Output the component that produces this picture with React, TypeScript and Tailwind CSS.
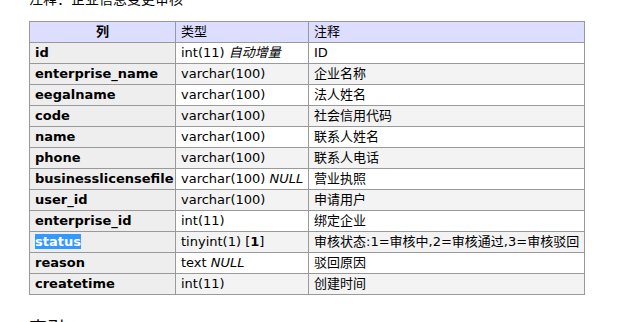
import React from "react";

const rows: { name: string; type: React.ReactNode; comment: string; sel?: boolean }[] = [
  { name: "id", type: <>int(11) <i>自动增量</i></>, comment: "ID" },
  { name: "enterprise_name", type: "varchar(100)", comment: "企业名称" },
  { name: "eegalname", type: "varchar(100)", comment: "法人姓名" },
  { name: "code", type: "varchar(100)", comment: "社会信用代码" },
  { name: "name", type: "varchar(100)", comment: "联系人姓名" },
  { name: "phone", type: "varchar(100)", comment: "联系人电话" },
  { name: "businesslicensefile", type: <>varchar(100) <i>NULL</i></>, comment: "营业执照" },
  { name: "user_id", type: "varchar(100)", comment: "申请用户" },
  { name: "enterprise_id", type: "int(11)", comment: "绑定企业" },
  { name: "status", type: <>tinyint(1) [<b>1</b>]</>, comment: "审核状态:1=审核中,2=审核通过,3=审核驳回", sel: true },
  { name: "reason", type: <>text <i>NULL</i></>, comment: "驳回原因" },
  { name: "createtime", type: "int(11)", comment: "创建时间" },
];

export default function App() {
  return (
    <div
      className="w-[623px] h-[322px] overflow-hidden bg-white text-black pl-[29px]"
      style={{ fontFamily: '"DejaVu Sans", Verdana, "Noto Sans CJK SC", sans-serif' }}
    >
      <div className="-mt-[10px] h-[18px] text-[14px] leading-[18px] whitespace-nowrap">注释：企业信息变更审核</div>
      <table className="mt-[13px] border-collapse text-[13px] leading-[20px] table-fixed w-[555px]">
        <colgroup>
          <col className="w-[146px]" />
          <col className="w-[133px]" />
          <col className="w-[276px]" />
        </colgroup>
        <thead>
          <tr className="bg-[#ddddff] h-[21px]">
            <th className="border border-[#999] px-[5px] py-0 font-bold text-center">列</th>
            <td className="border border-[#999] px-[5px] py-0">类型</td>
            <td className="border border-[#999] px-[5px] py-0">注释</td>
          </tr>
        </thead>
        <tbody>
          {rows.map((r, i) => (
            <tr key={r.name} className={`h-[21px] ${i % 2 === 1 ? "bg-[#f3f3f3]" : "bg-white"}`}>
              <th className="border border-[#999] bg-[#eeeeee] px-[5px] py-0 text-left font-bold whitespace-nowrap">
                {r.sel ? <span className="bg-[#3399ff] text-white">{r.name}</span> : r.name}
              </th>
              <td className="border border-[#999] px-[5px] py-0 whitespace-nowrap">{r.type}</td>
              <td className="border border-[#999] px-[5px] py-0 whitespace-nowrap">{r.comment}</td>
            </tr>
          ))}
        </tbody>
      </table>
      <div className="mt-[22px] text-[18px] leading-[24px]">索引</div>
    </div>
  );
}
